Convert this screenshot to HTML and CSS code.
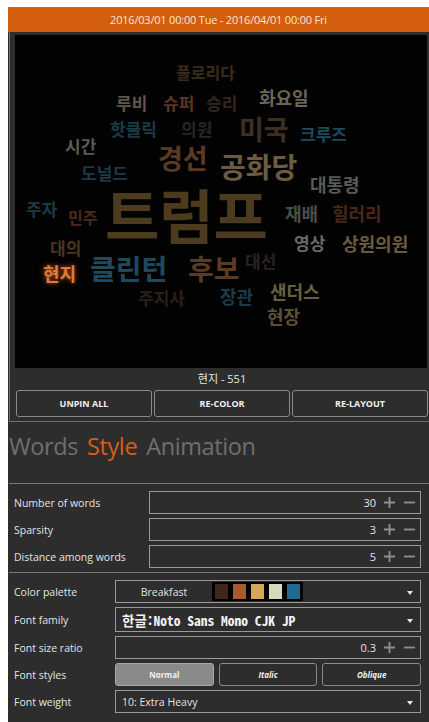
FILE: index.html
```html
<!DOCTYPE html>
<html lang="ko">
<head>
<meta charset="utf-8">
<title>Word Cloud</title>
<link rel="stylesheet" href="styles.css">
</head>
<body>
<div class="app">
  <header class="range">2016/03/01 00:00 Tue - 2016/04/01 00:00 Fri</header>
  <section class="viewer">
    <div class="cloud">
      <span class="w" style="left:161px;top:31px;font-size:16px;color:#3b2b1e">플로리다</span>
      <span class="w" style="left:101px;top:61px;font-size:17px;color:#5c574a">루비</span>
      <span class="w" style="left:148px;top:61px;font-size:17px;color:#5a3622">슈퍼</span>
      <span class="w" style="left:191px;top:61px;font-size:17px;color:#33271c">승리</span>
      <span class="w" style="left:244px;top:55px;font-size:18px;color:#6b6657">화요일</span>
      <span class="w" style="left:95px;top:87px;font-size:17px;color:#1c3a48">핫클릭</span>
      <span class="w" style="left:166px;top:87px;font-size:17px;color:#2a2520">의원</span>
      <span class="w" style="left:224px;top:82px;font-size:27px;color:#3d3020">미국</span>
      <span class="w" style="left:285px;top:92px;font-size:17px;color:#1e4a5e">크루즈</span>
      <span class="w" style="left:50px;top:104px;font-size:17px;color:#5e5b52">시간</span>
      <span class="w" style="left:143px;top:111px;font-size:27px;color:#5a3b22">경선</span>
      <span class="w" style="left:205px;top:119px;font-size:28px;color:#6b5b40">공화당</span>
      <span class="w" style="left:66px;top:131px;font-size:17px;color:#1b3a4a">도널드</span>
      <span class="w" style="left:295px;top:142px;font-size:18px;color:#5a5a55">대통령</span>
      <span class="w" style="left:90px;top:154px;font-size:59px;color:#4c3b1f">트럼프</span>
      <span class="w" style="left:11px;top:167px;font-size:17px;color:#1b3a4a">주자</span>
      <span class="w" style="left:53px;top:176px;font-size:16px;color:#4a2b1a">민주</span>
      <span class="w" style="left:270px;top:171px;font-size:18px;color:#4d4d48">재배</span>
      <span class="w" style="left:317px;top:171px;font-size:18px;color:#4a2618">힐러리</span>
      <span class="w" style="left:35px;top:206px;font-size:17px;color:#4a3520">대의</span>
      <span class="w" style="left:279px;top:201px;font-size:17px;color:#6a6a62">영상</span>
      <span class="w" style="left:327px;top:201px;font-size:18px;color:#6a5b40">상원의원</span>
      <span class="w" style="left:75px;top:221px;font-size:28px;color:#1e4a5e">클린턴</span>
      <span class="w" style="left:173px;top:221px;font-size:28px;color:#5a3a22">후보</span>
      <span class="w" style="left:230px;top:219px;font-size:17px;color:#2a2320">대선</span>
      <span class="w pick" style="left:28px;top:231px;font-size:18px">현지</span>
      <span class="w" style="left:123px;top:256px;font-size:17px;color:#2a2018">주지사</span>
      <span class="w" style="left:205px;top:254px;font-size:18px;color:#1b3a4a">장관</span>
      <span class="w" style="left:255px;top:249px;font-size:18px;color:#6a6040">샌더스</span>
      <span class="w" style="left:252px;top:274px;font-size:18px;color:#5a5035">현장</span>
    </div>
    <div class="selected">현지 - 551</div>
    <div class="actions">
      <button class="btn">UNPIN ALL</button>
      <button class="btn">RE-COLOR</button>
      <button class="btn">RE-LAYOUT</button>
    </div>
  </section>

  <nav class="tabs">
    <span class="tab">Words</span>
    <span class="tab active">Style</span>
    <span class="tab">Animation</span>
  </nav>

  <div class="group counts">
    <div class="row">
      <label class="lbl">Number of words</label>
      <div class="box stepper">
        <span class="val">30</span>
        <svg class="ico" viewBox="0 0 14 14"><path d="M7 1v12M1 7h12"/></svg>
        <svg class="ico" viewBox="0 0 14 14"><path d="M1 7h12"/></svg>
      </div>
    </div>
    <div class="row">
      <label class="lbl">Sparsity</label>
      <div class="box stepper">
        <span class="val">3</span>
        <svg class="ico" viewBox="0 0 14 14"><path d="M7 1v12M1 7h12"/></svg>
        <svg class="ico" viewBox="0 0 14 14"><path d="M1 7h12"/></svg>
      </div>
    </div>
    <div class="row">
      <label class="lbl">Distance among words</label>
      <div class="box stepper">
        <span class="val">5</span>
        <svg class="ico" viewBox="0 0 14 14"><path d="M7 1v12M1 7h12"/></svg>
        <svg class="ico" viewBox="0 0 14 14"><path d="M1 7h12"/></svg>
      </div>
    </div>
  </div>

  <div class="group looks">
    <div class="row">
      <label class="lbl">Color palette</label>
      <div class="box select">
        <span class="palette-name">Breakfast</span>
        <span class="swatches">
          <i style="background:#3f2817"></i>
          <i style="background:#a65a30"></i>
          <i style="background:#d6a757"></i>
          <i style="background:#d9d9ba"></i>
          <i style="background:#1e6a90"></i>
        </span>
        <span class="caret"></span>
      </div>
    </div>
    <div class="row tall">
      <label class="lbl">Font family</label>
      <div class="box select">
        <span class="mono">한글:Noto Sans Mono CJK JP</span>
        <span class="caret"></span>
      </div>
    </div>
    <div class="row">
      <label class="lbl">Font size ratio</label>
      <div class="box stepper">
        <span class="val">0.3</span>
        <svg class="ico" viewBox="0 0 14 14"><path d="M7 1v12M1 7h12"/></svg>
        <svg class="ico" viewBox="0 0 14 14"><path d="M1 7h12"/></svg>
      </div>
    </div>
    <div class="row">
      <label class="lbl">Font styles</label>
      <div class="styles">
        <button class="btn on">Normal</button>
        <button class="btn ital">Italic</button>
        <button class="btn ital">Oblique</button>
      </div>
    </div>
    <div class="row">
      <label class="lbl">Font weight</label>
      <div class="box select">
        <span class="plain">10: Extra Heavy</span>
        <span class="caret"></span>
      </div>
    </div>
  </div>
</div>
</body>
</html>
```

FILE: styles.css
```css
html, body {
  margin: 0;
  padding: 0;
  background: #fff;
  overflow: hidden;
}

body {
  padding: 7px 0 0 8px;
  font-family: "Open Sans", "Noto Sans", "Noto Sans CJK KR", sans-serif;
}

.app {
  width: 421px;
  height: 715px;
  background: #2d2d2d;
  color: #e2e2e2;
}

/* date range bar */
.range {
  height: 25px;
  background: #d35e0d;
  color: #f6e6d8;
  font-size: 11px;
  line-height: 25px;
  text-align: center;
  letter-spacing: -0.2px;
}

/* orange framed viewer */
.viewer {
  margin-left: 1px;
  border-left: 1px solid #c4570f;
  border-bottom: 1px solid #c4570f;
  padding: 3px 0 4px 5px;
}

.cloud {
  position: relative;
  width: 412px;
  height: 333px;
  background: #020202;
  overflow: hidden;
}

.w {
  position: absolute;
  font-family: "Noto Sans CJK KR", sans-serif;
  font-weight: 700;
  line-height: 0.86;
  white-space: nowrap;
}

.w.pick {
  color: #e27a3c;
  text-shadow: 0 0 4px rgba(226, 110, 40, 0.7), 0 0 8px rgba(226, 110, 40, 0.35);
}

.selected {
  height: 22px;
  line-height: 22px;
  text-align: center;
  font-size: 11px;
  color: #e8e8e8;
  font-family: "Open Sans", "Noto Sans CJK KR", sans-serif;
}

.actions {
  display: grid;
  grid-template-columns: repeat(3, 1fr);
  gap: 2px;
  width: 412px;
  margin-left: 1px;
}

.btn {
  height: 27px;
  background: #2d2d2d;
  border: 1px solid #8a8a8a;
  border-radius: 3px;
  color: #f0f0f0;
  font-family: "Open Sans", sans-serif;
  font-size: 9px;
  font-weight: 700;
  padding: 0;
}

/* tabs */
.tabs {
  height: 62px;
  box-sizing: border-box;
  margin-left: 1px;
  padding-top: 13px;
  border-bottom: 1px solid #7a7a7a;
  display: flex;
  gap: 9px;
  font-size: 23.5px;
  line-height: 1;
}

.tab {
  color: #6f6f6f;
  letter-spacing: -0.4px;
}

.tab.active {
  color: #d6600f;
}

/* settings groups */
.group {
  display: flex;
  flex-direction: column;
  gap: 4px;
  padding: 7px 8px 0 6px;
}

.counts {
  padding-bottom: 4px;
  margin-left: 1px;
  padding-left: 5px;
  border-bottom: 1px solid #7a7a7a;
}

.looks {
  padding-top: 7px;
}

.row {
  display: grid;
  align-items: center;
  height: 23px;
}

.counts .row {
  grid-template-columns: 135px 1fr;
}

.looks .row {
  grid-template-columns: 101px 1fr;
}

.looks .row.tall {
  height: 25px;
}

.lbl {
  font-size: 10.5px;
  color: #e4e4e4;
}

.box {
  height: 100%;
  box-sizing: border-box;
  border: 1px solid #9a9a9a;
  display: flex;
  align-items: center;
}

.stepper {
  justify-content: flex-end;
  padding-right: 4px;
  gap: 7px;
}

.stepper .val {
  font-size: 11px;
  color: #e4e4e4;
}

.ico {
  width: 13px;
  height: 13px;
  fill: none;
  stroke: #8e8e8e;
  stroke-width: 2;
}

.select {
  position: relative;
  padding-right: 18px;
}

.caret {
  position: absolute;
  right: 7px;
  top: 50%;
  margin-top: -1px;
  border-left: 3px solid transparent;
  border-right: 3px solid transparent;
  border-top: 4px solid #e8e8e8;
}

.palette-name {
  width: 96px;
  text-align: center;
  font-size: 10.5px;
  color: #e4e4e4;
}

.swatches {
  display: flex;
  gap: 5px;
  background: #000;
  padding: 2px 3px;
}

.swatches i {
  display: block;
  width: 13px;
  height: 15px;
}

.mono {
  padding-left: 6px;
  font-family: "Noto Sans Mono CJK JP", "Noto Sans Mono CJK KR", "DejaVu Sans Mono", monospace;
  font-weight: 700;
  font-size: 13.5px;
  color: #f4f4f4;
}

.plain {
  padding-left: 6px;
  font-size: 10.5px;
  color: #e4e4e4;
}

.styles {
  display: grid;
  grid-template-columns: repeat(3, 1fr);
  gap: 5px;
  height: 23px;
}

.styles .btn {
  height: 23px;
  font-size: 8px;
}

.styles .btn.on {
  background: #8a8a8a;
  border-color: #a8a8a8;
}

.styles .btn.ital {
  font-style: italic;
}
```
